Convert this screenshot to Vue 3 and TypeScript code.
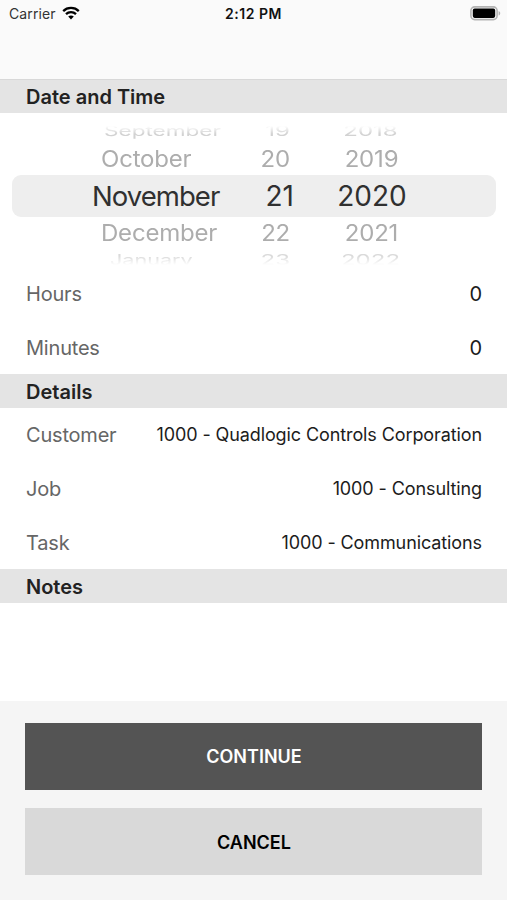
<script setup lang="ts">
interface WheelRow {
  month: string
  day: string
  year: string
  kind: string
}

interface Field {
  label: string
  value: string
}

const wheel: WheelRow[] = [
  { month: 'September', day: '19', year: '2018', kind: 'edge top' },
  { month: 'October', day: '20', year: '2019', kind: 'near before' },
  { month: 'November', day: '21', year: '2020', kind: 'selected' },
  { month: 'December', day: '22', year: '2021', kind: 'near after' },
  { month: 'January', day: '23', year: '2022', kind: 'edge bottom' },
]

const duration: Field[] = [
  { label: 'Hours', value: '0' },
  { label: 'Minutes', value: '0' },
]

const details: Field[] = [
  { label: 'Customer', value: '1000 - Quadlogic Controls Corporation' },
  { label: 'Job', value: '1000 - Consulting' },
  { label: 'Task', value: '1000 - Communications' },
]
</script>

<template>
  <main class="screen">
    <header class="status">
      <div class="carrier">
        <span>Carrier</span>
        <svg class="wifi" viewBox="0 0 18 14" width="18" height="14">
          <path d="M1.2 5.1C5.5 .9 12.5 .9 16.8 5.1" />
          <path d="M4 8.1c2.8-2.7 7.2-2.7 10 0" />
          <path class="dot" d="M6.2 10.5c1.6-1.5 4-1.5 5.6 0L9 13.4z" />
        </svg>
      </div>
      <time class="clock">2:12 PM</time>
      <svg class="battery" viewBox="0 0 31 15" width="31" height="15">
        <rect x=".9" y=".9" width="26.2" height="12.7" rx="3.8" fill="#fafafa" stroke="#b3b3b3" stroke-width="1.6" />
        <rect x="2.8" y="2.6" width="22.4" height="9.3" rx="1.8" fill="#000" />
        <path d="M28.6 5v4.6c2.2-.8 2.2-3.8 0-4.6z" fill="#b3b3b3" />
      </svg>
    </header>

    <h2 class="section first">Date and Time</h2>
    <div class="wheel">
      <div v-for="row in wheel" :key="row.month" class="row" :class="row.kind">
        <span class="month">{{ row.month }}</span>
        <span class="day">{{ row.day }}</span>
        <span class="year">{{ row.year }}</span>
      </div>
    </div>
    <div v-for="f in duration" :key="f.label" class="field number">
      <span class="label">{{ f.label }}</span>
      <span class="value">{{ f.value }}</span>
    </div>

    <h2 class="section">Details</h2>
    <div v-for="f in details" :key="f.label" class="field detail">
      <span class="label">{{ f.label }}</span>
      <span class="value">{{ f.value }}</span>
    </div>

    <h2 class="section">Notes</h2>
    <div class="notes"></div>

    <footer class="actions">
      <button class="primary" type="button">CONTINUE</button>
      <button class="secondary" type="button">CANCEL</button>
    </footer>
  </main>
</template>

<style>
body {
  margin: 0;
  background: #fff;
}
</style>

<style scoped>
.screen {
  display: flex;
  flex-direction: column;
  width: 507px;
  height: 900px;
  overflow: hidden;
  background: #fff;
  color: #1c1c1c;
  font-family: Inter, "Liberation Sans", sans-serif;
}

.status {
  flex: none;
  display: grid;
  grid-template-columns: 1fr auto 1fr;
  align-items: start;
  box-sizing: border-box;
  height: 79px;
  padding: 5px 6px 0 6px;
  background: #fafafa;
  font-size: 14px;
  line-height: 18px;
}

.carrier {
  display: flex;
  gap: 6px;
  padding-left: 3px;
  color: #333;
  letter-spacing: 0.1px;
}

.wifi {
  margin-top: 1px;
  fill: none;
  stroke: #000;
  stroke-width: 2.3;
}

.wifi .dot {
  fill: #000;
  stroke: none;
}

.clock {
  color: #111;
  font-weight: 600;
  letter-spacing: 0.5px;
}

.battery {
  justify-self: end;
  margin-top: 1px;
}

.section {
  flex: none;
  box-sizing: border-box;
  height: 34px;
  margin: 0;
  padding-left: 26px;
  background: #e4e4e4;
  color: #222;
  font-size: 20px;
  font-weight: 600;
  line-height: 36px;
}

.section.first {
  border-top: 1px solid #d8d8d8;
  line-height: 35px;
}

.wheel {
  flex: none;
  box-sizing: border-box;
  height: 153px;
  padding: 13px 11px 0 12px;
  -webkit-mask-image: linear-gradient(transparent 13px, #000 21px, #000 143px, transparent 152px);
  mask-image: linear-gradient(transparent 13px, #000 21px, #000 143px, transparent 152px);
}

.row {
  display: grid;
  grid-template-columns: 140px 62px 156px;
  align-items: center;
  box-sizing: border-box;
  padding-left: 80px;
  line-height: 28px;
  white-space: nowrap;
}

.month {
  justify-self: start;
  transform-origin: left center;
}

.day {
  justify-self: end;
}

.year {
  justify-self: center;
}

.near {
  grid-template-columns: 139px 50px 163px;
  padding-left: 89px;
  color: #adadad;
  font-size: 24px;
  letter-spacing: -0.2px;
}

.near span {
  transform: scaleY(0.95);
}

.near.before {
  height: 34px;
  padding-top: 2px;
}

.near.after {
  height: 32px;
}

.selected {
  height: 42px;
  border-radius: 9px;
  background: #eee;
  color: #303030;
  font-size: 28px;
}

.selected .month {
  font-size: 27.5px;
  letter-spacing: -0.95px;
}

.edge {
  grid-template-columns: 137px 49px 161px;
  height: 15px;
  padding-left: 92px;
  color: #d2d2d2;
  font-size: 24px;
  line-height: 15px;
}

.edge span {
  transform: scaleY(0.6);
}

.edge .month {
  transform: scale(0.94, 0.6);
}

.top {
  align-items: start;
  line-height: 10px;
}

.bottom {
  grid-template-columns: 131px 49px 161px;
  height: 18px;
  padding-left: 98px;
  color: #dadada;
  line-height: 22px;
}

.bottom .month {
  transform: scale(0.9, 0.6);
}

.field {
  flex: none;
  display: flex;
  align-items: center;
  justify-content: space-between;
  box-sizing: border-box;
  height: 54px;
  padding: 0 25px 0 26px;
  color: #1c1c1c;
  font-size: 18px;
  letter-spacing: -0.1px;
}

.number {
  padding-top: 2px;
}

.detail {
  height: 53.8px;
}

.detail .label {
  padding-top: 1px;
}

.label {
  color: #666;
  font-size: 20px;
  letter-spacing: -0.2px;
}

.number .value {
  font-size: 20px;
}

.notes {
  flex: 1;
}

.actions {
  flex: none;
  display: flex;
  flex-direction: column;
  gap: 18px;
  box-sizing: border-box;
  height: 199px;
  padding: 22px 25px 0;
  background: #f5f5f5;
}

.actions button {
  height: 67px;
  border: 0;
  padding: 1px 0 0 1px;
  font: 600 18px/66px Inter, "Liberation Sans", sans-serif;
}

.primary {
  background: #545454;
  color: #fff;
}

.actions .secondary {
  padding-top: 2px;
  background: #d9d9d9;
  color: #000;
}
</style>
